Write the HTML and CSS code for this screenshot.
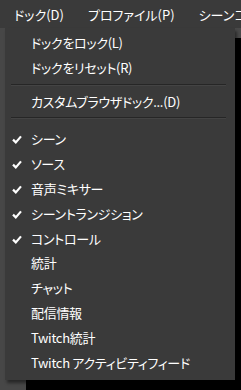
FILE: index.html
```html
<!DOCTYPE html>
<html lang="ja">
  <head>
    <meta charset="UTF-8">
    <title>ドック メニュー</title>
    <link rel="stylesheet" href="styles.css">
  </head>
  <body>
    <div class="menubar">
      <span class="menubar-item">ドック(D)</span>
      <span class="menubar-item">プロファイル(P)</span>
      <span class="menubar-item">シーンコレクション(S)</span>
    </div>
    <div class="workspace">
      <div class="side"></div>
      <div class="canvas"></div>
    </div>

    <div class="popup">
      <div class="item">ドックをロック(L)</div>
      <div class="item">ドックをリセット(R)</div>
      <div class="sep"></div>
      <div class="item">カスタムブラウザドック...(D)</div>
      <div class="sep sep-wide"></div>
      <div class="item"><svg class="check" viewBox="0 0 10 9"><path d="M1 4.6 L3.8 7.4 L9 1.4"/></svg>シーン</div>
      <div class="item"><svg class="check" viewBox="0 0 10 9"><path d="M1 4.6 L3.8 7.4 L9 1.4"/></svg>ソース</div>
      <div class="item"><svg class="check" viewBox="0 0 10 9"><path d="M1 4.6 L3.8 7.4 L9 1.4"/></svg>音声ミキサー</div>
      <div class="item"><svg class="check" viewBox="0 0 10 9"><path d="M1 4.6 L3.8 7.4 L9 1.4"/></svg>シーントランジション</div>
      <div class="item"><svg class="check" viewBox="0 0 10 9"><path d="M1 4.6 L3.8 7.4 L9 1.4"/></svg>コントロール</div>
      <div class="item">統計</div>
      <div class="item">チャット</div>
      <div class="item">配信情報</div>
      <div class="item">Twitch統計</div>
      <div class="item">Twitch アクティビティフィード</div>
    </div>
  </body>
</html>
```

FILE: styles.css
```css
body {
  margin: 0;
  background: #000;
  font-family: "Noto Sans CJK JP", "Noto Sans", sans-serif;
  font-feature-settings: "palt";
  color: #fff;
  overflow: hidden;
}
.menubar {
  height: 28px;
  background: #3a3a3a;
  display: flex;
  align-items: center;
  white-space: nowrap;
  overflow: hidden;
  padding-left: 14px;
  gap: 24px;
}
.menubar-item {
  font-size: 13px;
}
.workspace {
  display: flex;
  height: 362px;
}
.side {
  width: 26px;
  background: #474747;
}
.canvas {
  flex: 1;
  background: #000;
  border-top: 10px solid #4a4a4a;
}
.popup {
  position: absolute;
  left: 5px;
  top: 28px;
  width: 230px;
  height: 352px;
  box-sizing: border-box;
  padding-top: 3px;
  background: #3a3a3a;
  box-shadow: 2px 3px 3px rgba(0, 0, 0, 0.45);
}
.item {
  height: 24.8px;
  line-height: 24.8px;
  padding-left: 26px;
  position: relative;
  white-space: nowrap;
  font-size: 13px;
  letter-spacing: -0.3px;
}
.check {
  position: absolute;
  left: 7px;
  top: 8px;
  width: 10px;
  height: 9px;
}
.check path {
  fill: none;
  stroke: #fff;
  stroke-width: 2.2;
}
.sep {
  height: 9px;
  margin: 0 9px 0 6px;
  position: relative;
}
.sep-wide {
  height: 13px;
}
.sep::after {
  content: "";
  position: absolute;
  left: 0;
  right: 0;
  top: 3px;
  height: 1px;
  background: #262626;
  border-bottom: 1px solid #444;
}
```
